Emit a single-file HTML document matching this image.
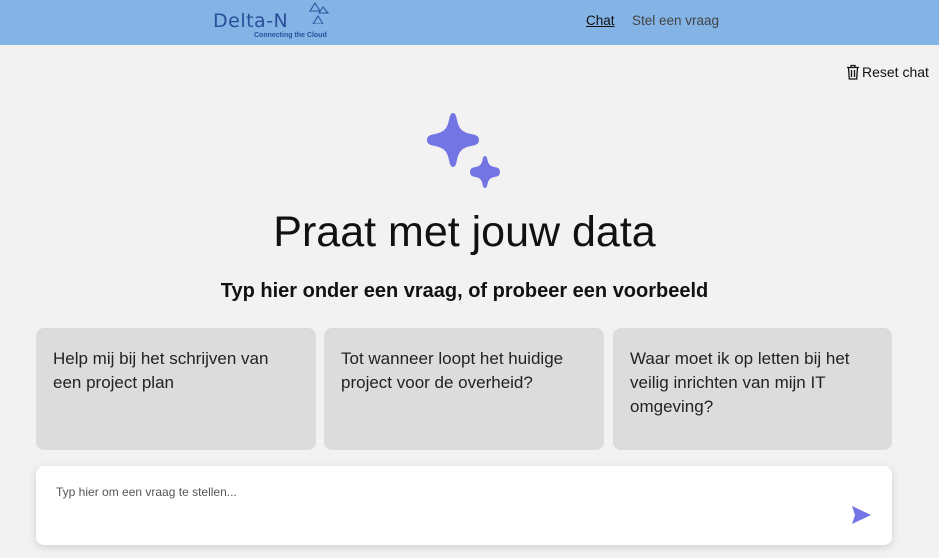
<!DOCTYPE html>
<html><head><meta charset="utf-8"><style>
*{margin:0;padding:0;box-sizing:border-box}
body{width:939px;height:558px;overflow:hidden;background:#f2f2f2;font-family:"Liberation Sans",sans-serif;position:relative;color:#111}
.hdr{position:absolute;left:0;top:0;width:939px;height:45px;background:#84b4e6}
.logo{position:absolute;left:213px;top:10px;font-size:19px;color:#2a4f9a;letter-spacing:0.5px;font-family:"DejaVu Sans",sans-serif}
.tag{position:absolute;left:254px;top:32px;font-size:7px;font-weight:bold;color:#2a4f9a}
.nav{position:absolute;top:13px;font-size:13.5px}
.reset{position:absolute;left:846px;top:64px;font-size:14px;color:#111;display:flex;align-items:center;gap:2px}
h1{position:absolute;left:0;width:929px;text-align:center;top:208px;font-size:43px;font-weight:normal;color:#111}
h2{position:absolute;left:0;width:929px;text-align:center;top:280px;font-size:20px;font-weight:bold;color:#111}
.card{position:absolute;top:328px;height:122px;background:#dcdcdc;border-radius:8px;padding:19px 17px;font-size:17px;line-height:24px;color:#222}
.inp{position:absolute;left:36px;top:466px;width:856px;height:79px;background:#fff;border-radius:8px;box-shadow:0 2px 8px rgba(0,0,0,.15)}
.ph{position:absolute;left:20px;top:19px;font-size:12px;color:#555}
</style></head><body>
<div class="hdr">
<div class="logo">Delta-N</div>
<svg style="position:absolute;left:308px;top:2px" width="22" height="22" viewBox="0 0 22 22" fill="none" stroke="#2a4f9a" stroke-width="1"><path d="M7 1L12 9H2Z"/><path d="M11 11H20L15 5Z"/><path d="M5 22L10 14L15 22Z"/></svg>
<div class="tag">Connecting the Cloud</div>
<div class="nav" style="left:586px;text-decoration:underline;color:#111">Chat</div>
<div class="nav" style="left:632px;color:#444">Stel een vraag</div>
</div>
<div class="reset"><svg width="14" height="16" viewBox="0 0 14 16" fill="none" stroke="#111" stroke-width="1.3"><path d="M1 3.5H13M5 3.5V1.5H9V3.5M2.5 3.5L3.3 15H10.7L11.5 3.5M5.5 6V13M8.5 6V13"/></svg>Reset chat</div>
<svg style="position:absolute;left:420px;top:110px" width="90" height="85" viewBox="0 0 90 85" fill="#7275e3"><path d="M33 3C35 3 36 5 37 10C39 19 42 22 51 24C56 25 59 26 59 30C59 34 56 35 51 36C42 38 39 41 37 50C36 55 35 57 33 57C31 57 30 55 29 50C27 41 24 38 15 36C10 35 7 34 7 30C7 26 10 25 15 24C24 22 27 19 29 10C30 5 31 3 33 3Z"/><path d="M65 46C66.5 46 67 47.5 67.5 50C68.5 54.5 70 56 74.5 57C77 57.5 80 58 80 62C80 66 77 66.5 74.5 67C70 68 68.5 69.5 67.5 74C67 76.5 66.5 78 65 78C63.5 78 63 76.5 62.5 74C61.5 69.5 60 68 55.5 67C53 66.5 50 66 50 62C50 58 53 57.5 55.5 57C60 56 61.5 54.5 62.5 50C63 47.5 63.5 46 65 46Z"/></svg>
<h1>Praat met jouw data</h1>
<h2>Typ hier onder een vraag, of probeer een voorbeeld</h2>
<div class="card" style="left:36px;width:280px">Help mij bij het schrijven van een project plan</div>
<div class="card" style="left:324px;width:280px">Tot wanneer loopt het huidige project voor de overheid?</div>
<div class="card" style="left:613px;width:279px">Waar moet ik op letten bij het veilig inrichten van mijn IT omgeving?</div>
<div class="inp"><div class="ph">Typ hier om een vraag te stellen...</div>
<svg style="position:absolute;left:816px;top:40px" width="19" height="18" viewBox="0 0 19 18" fill="#7275e3"><path d="M0 0L19 9L0 18L3 9Z"/></svg></div>
</body></html>
